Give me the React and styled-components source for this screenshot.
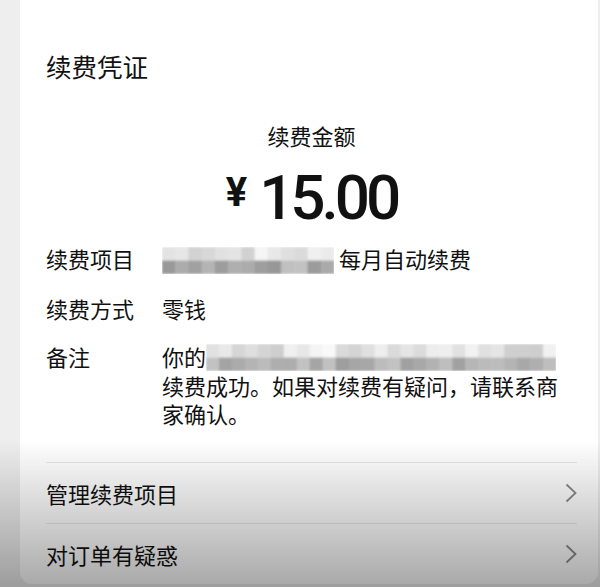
import React from 'react'
import styled, { createGlobalStyle } from 'styled-components'

const GlobalStyle = createGlobalStyle`
body{
    margin:0;
    background:#eeeeee;
    font-family:"Noto Sans CJK SC","Noto Sans",sans-serif;
    color:#111;
}
`

const Page = styled.div`
display:flex;
min-height:587px;
box-sizing:border-box;
padding:0 2px 3px 20px;
`

const Card = styled.div`
flex:1;
background:#fff;
border-radius:0 0 12px 12px;
padding:51px 21px 0 26px;
display:flex;
flex-direction:column;
`

const Title = styled.h2`
margin:0;
font-size:25.5px;
font-weight:400;
line-height:30px;
`

const AmountLabel = styled.div`
margin-top:39px;
text-align:center;
font-size:22px;
line-height:30px;
`

const Amount = styled.div`
margin-top:12px;
height:70px;
display:flex;
align-items:center;
justify-content:center;
gap:12px;
`

const Yen = styled.span`
font-family:Roboto,"Liberation Sans",sans-serif;
font-size:40px;
font-weight:700;
margin-bottom:10px;
`

const Digits = styled.span`
font-family:Roboto,"Liberation Sans",sans-serif;
font-size:62px;
font-weight:500;
letter-spacing:-4px;
`

const Details = styled.div`
margin-top:12px;
display:grid;
grid-template-columns:116px 1fr;
row-gap:20px;
font-size:22px;
line-height:28px;
`

const Label = styled.span``

const Value = styled.span``

const Mosaic = styled.svg`
display:inline-block;
vertical-align:middle;
margin-top:-4px;
`

const List = styled.div`
margin-top:35px;
`

const Item = styled.div`
height:61px;
border-top:1px solid #e8e8e8;
box-sizing:border-box;
display:flex;
align-items:center;
justify-content:space-between;
font-size:22px;
`

const Shade = styled.div`
position:fixed;
left:0;
right:0;
bottom:0;
height:147px;
pointer-events:none;
background:linear-gradient(to bottom,rgba(0,0,0,0) 0%,rgba(0,0,0,0.34) 100%);
`

// pseudo random greys for the blurred parts
function cells(cols, seed) {
    const out = []
    let s = seed
    for (let r = 0; r < 2; r++) {
        for (let c = 0; c < cols; c++) {
            s = (s * 9301 + 49297) % 233280
            const t = s / 233280
            const base = r === 0 ? 205 : 150
            const g = Math.round(base + t * 45)
            out.push({ r, c, g })
        }
    }
    return out
}

function Blur({ width, cols, seed }) {
    const w = width / cols
    return (
        <Mosaic width={width} height={27} viewBox={`0 0 ${width} 27`}>
            <defs>
                <filter id={`b${seed}`}><feGaussianBlur stdDeviation="0.8" /></filter>
            </defs>
            <g filter={`url(#b${seed})`}>
                {cells(cols, seed).map(({ r, c, g }) => (
                    <rect key={`${r}-${c}`} x={c * w} y={r * 13.5} width={w + 0.5} height={13.5}
                        fill={`rgb(${g},${g},${g})`} />
                ))}
            </g>
        </Mosaic>
    )
}

const Chevron = () => (
    <svg width="12" height="20" viewBox="0 0 12 20">
        <polyline points="1.5,1.5 10.5,10 1.5,18.5" fill="none" stroke="#8a8a8a" strokeWidth="1.8" />
    </svg>
)

export default function App() {
    return (
        <>
            <GlobalStyle />
            <Page>
                <Card>
                    <Title>续费凭证</Title>
                    <AmountLabel>续费金额</AmountLabel>
                    <Amount>
                        <Yen>¥</Yen>
                        <Digits>15.00</Digits>
                    </Amount>
                    <Details>
                        <Label>续费项目</Label>
                        <Value><Blur width={172} cols={13} seed={7} /> 每月自动续费</Value>
                        <Label>续费方式</Label>
                        <Value>零钱</Value>
                        <Label>备注</Label>
                        <Value>你的<Blur width={350} cols={27} seed={31} />续费成功。如果对续费有疑问，请联系商家确认。</Value>
                    </Details>
                    <List>
                        <Item>管理续费项目<Chevron /></Item>
                        <Item>对订单有疑惑<Chevron /></Item>
                    </List>
                </Card>
            </Page>
            <Shade />
        </>
    )
}
